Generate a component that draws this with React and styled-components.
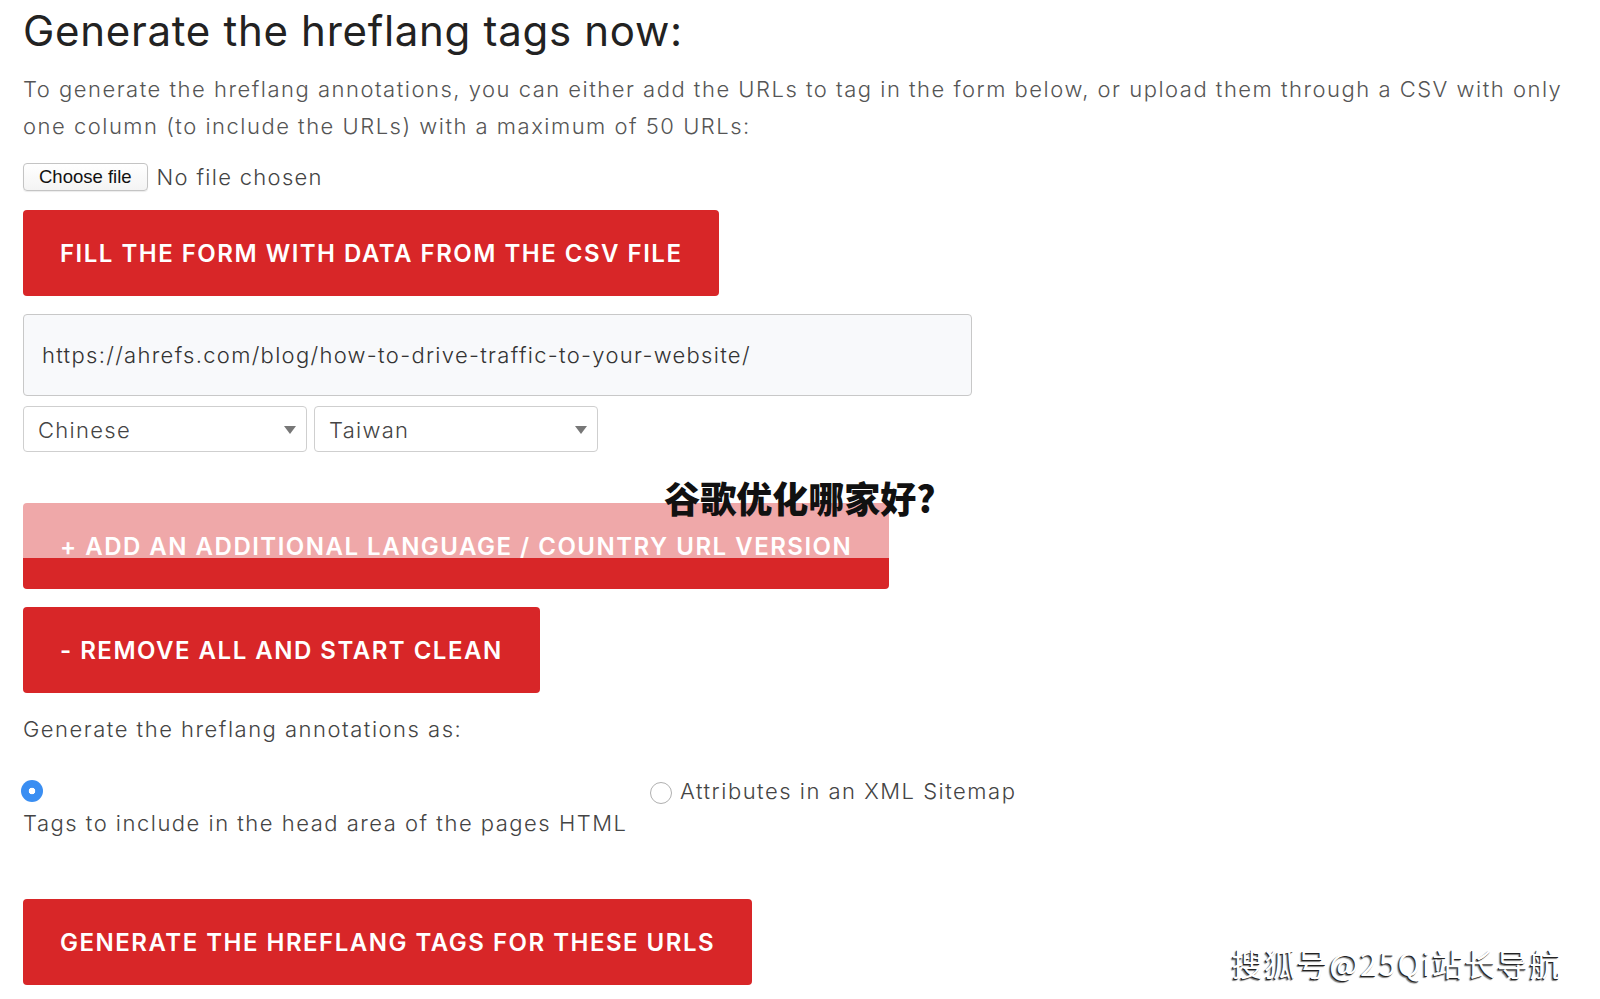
import React from "react";
import styled, { createGlobalStyle } from "styled-components";

const GlobalStyle = createGlobalStyle`
  html, body {
    margin: 0;
    padding: 0;
    background: #fff;
  }
  body {
    font-family: "Inter", "Open Sans", sans-serif;
    color: #444;
  }
`;

const Page = styled.div`
  position: relative;
  width: 1600px;
  height: 999px;
  overflow: hidden;
  padding: 0 23px;
  box-sizing: border-box;
`;

const Title = styled.h1`
  margin: 0;
  padding-top: 6px;
  font-size: 42px;
  line-height: 50px;
  font-weight: 400;
  color: #222;
  letter-spacing: 0.7px;
`;

const Intro = styled.p`
  margin: 15px 0 0;
  font-size: 22px;
  line-height: 37px;
  font-weight: 300;
  color: #555;
  letter-spacing: 1.5px;
`;

const FileRow = styled.div`
  display: flex;
  align-items: center;
  gap: 9px;
  margin-top: 18px;
`;

const FileButton = styled.button`
  height: 28px;
  padding: 0 15px;
  border: 1px solid #c4c4c4;
  border-radius: 4px;
  background: linear-gradient(#fff, #f4f4f4);
  box-shadow: 0 1px 1px rgba(0, 0, 0, 0.08);
  font-family: "Liberation Sans", Arial, sans-serif;
  font-size: 18.5px;
  color: #111;
`;

const FileLabel = styled.span`
  font-size: 22px;
  font-weight: 300;
  color: #444;
  letter-spacing: 1.3px;
`;

const RedButton = styled.button`
  display: block;
  height: 86px;
  padding: 0 37px;
  margin-top: ${(p) => p.mt || "0"};
  border: none;
  border-radius: 4px;
  background: #d82628;
  color: #fff;
  font-family: "Inter", "Open Sans", sans-serif;
  font-size: 24px;
  font-weight: 600;
  letter-spacing: 1.5px;
  text-transform: uppercase;
  text-align: left;
`;

const UrlInput = styled.div`
  width: 949px;
  height: 82px;
  margin-top: 18px;
  box-sizing: border-box;
  display: flex;
  align-items: center;
  padding: 0 18px;
  border: 1px solid #c8c8c8;
  border-radius: 4px;
  background: #f8f9fb;
  font-size: 22px;
  font-weight: 300;
  color: #333;
  letter-spacing: 1.3px;
`;

const SelectRow = styled.div`
  display: flex;
  gap: 7px;
  margin-top: 10px;
`;

const Select = styled.div`
  position: relative;
  width: 284px;
  height: 46px;
  box-sizing: border-box;
  display: flex;
  align-items: center;
  padding: 2px 14px 0;
  border: 1px solid #cfcfcf;
  border-radius: 4px;
  background: #fff;
  font-size: 22px;
  font-weight: 300;
  color: #444;
  letter-spacing: 1.3px;
`;

const Caret = styled.span`
  position: absolute;
  right: 10px;
  top: 50%;
  margin-top: -3px;
  width: 0;
  height: 0;
  border-left: 6px solid transparent;
  border-right: 6px solid transparent;
  border-top: 8px solid #777;
`;

const Label = styled.div`
  margin-top: 18px;
  font-size: 22px;
  line-height: 36px;
  font-weight: 300;
  color: #444;
  letter-spacing: 1.5px;
`;

const RadioGrid = styled.div`
  display: grid;
  grid-template-columns: 627px 1fr;
  margin-top: 26px;
`;

const RadioOption = styled.div`
  display: flex;
  flex-wrap: wrap;
  align-items: center;
  align-content: flex-start;
  column-gap: 8px;
  font-size: 22px;
  line-height: 36px;
  font-weight: 300;
  color: #444;
  letter-spacing: 1.5px;
`;

const Radio = styled.span`
  width: 22px;
  height: 22px;
  margin: 7px 0 3px ${(p) => (p.checked ? "-2px" : "0")};
  box-sizing: border-box;
  border-radius: 50%;
  flex: none;
  ${(p) =>
    p.checked
      ? `background: radial-gradient(circle, #fff 0 3px, #3a8ef2 3.6px);`
      : `background: #fff; border: 1px solid #b0b0b0;`}
`;

const RadioText = styled.span`
  flex-basis: ${(p) => (p.$wrap ? "100%" : "auto")};
`;

const Overlay = styled.div`
  position: absolute;
  left: 0;
  right: 0;
  top: 458px;
  height: 100px;
  background: rgba(255, 255, 255, 0.6);
  display: flex;
  justify-content: center;
  padding-top: 19px;
  box-sizing: border-box;
`;

const OverlayTitle = styled.div`
  font-family: "Noto Sans CJK SC", "Noto Sans", sans-serif;
  font-size: 36px;
  line-height: 40px;
  font-weight: 900;
  color: #111;
`;

const Watermark = styled.div`
  position: absolute;
  right: 38px;
  bottom: 14px;
  font-family: "Noto Sans CJK SC", "Noto Sans", sans-serif;
  font-size: 31px;
  font-weight: 400;
  color: #fff;
  letter-spacing: 1.5px;
  text-shadow: -1px 1px 0 #222, -2px 2px 1px rgba(0, 0, 0, 0.5);
`;

const App = () => {
  return (
    <Page>
      <GlobalStyle />
      <Title>Generate the hreflang tags now:</Title>
      <Intro>
        To generate the hreflang annotations, you can either add the URLs to
        tag in the form below, or upload them through a CSV with only one
        column (to include the URLs) with a maximum of 50 URLs:
      </Intro>
      <FileRow>
        <FileButton>Choose file</FileButton>
        <FileLabel>No file chosen</FileLabel>
      </FileRow>
      <RedButton mt="19px">Fill the form with data from the CSV file</RedButton>
      <UrlInput>https://ahrefs.com/blog/how-to-drive-traffic-to-your-website/</UrlInput>
      <SelectRow>
        <Select>
          Chinese
          <Caret />
        </Select>
        <Select>
          Taiwan
          <Caret />
        </Select>
      </SelectRow>
      <RedButton mt="51px">+ Add an additional language / country URL version</RedButton>
      <RedButton mt="18px">- Remove all and start clean</RedButton>
      <Label>Generate the hreflang annotations as:</Label>
      <RadioGrid>
        <RadioOption>
          <Radio checked />
          <RadioText $wrap>Tags to include in the head area of the pages HTML</RadioText>
        </RadioOption>
        <RadioOption>
          <Radio />
          <RadioText>Attributes in an XML Sitemap</RadioText>
        </RadioOption>
      </RadioGrid>
      <RedButton mt="58px">Generate the hreflang tags for these URLs</RedButton>
      <Overlay>
        <OverlayTitle>谷歌优化哪家好?</OverlayTitle>
      </Overlay>
      <Watermark>搜狐号@25Qi站长导航</Watermark>
    </Page>
  );
};

export default App;
